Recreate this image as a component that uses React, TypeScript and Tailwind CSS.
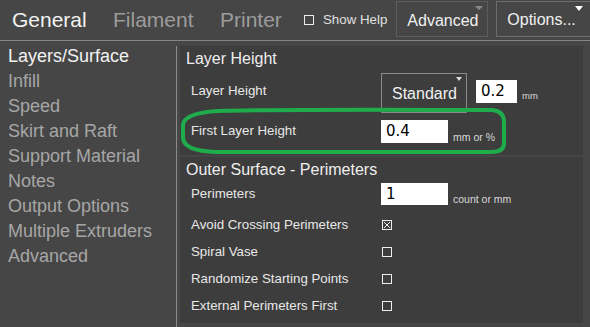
const font = { fontFamily: '"Liberation Sans", Arial, sans-serif' };

const sideItems = [
  'Layers/Surface',
  'Infill',
  'Speed',
  'Skirt and Raft',
  'Support Material',
  'Notes',
  'Output Options',
  'Multiple Extruders',
  'Advanced',
];

function Check({ checked }: { checked?: boolean }) {
  return (
    <svg width="10" height="10" viewBox="0 0 10 10" className="block shrink-0">
      <rect x="0.5" y="0.5" width="9" height="9" fill="none" stroke="#eeeeee" strokeWidth="1" />
      {checked && (
        <path d="M2 2 L8 8 M8 2 L2 8" stroke="#eeeeee" strokeWidth="1" fill="none" />
      )}
    </svg>
  );
}

function CheckRow({ label, checked }: { label: string; checked?: boolean }) {
  return (
    <div className="flex items-center h-[27px]">
      <div className="w-[201px] shrink-0 pl-[11px] text-[13.3px] leading-[16px] text-[#e8e8e8]">{label}</div>
      <div className="ml-[1px]">
        <Check checked={checked} />
      </div>
    </div>
  );
}

export default function App() {
  return (
    <div className="relative w-[590px] h-[327px] overflow-hidden bg-[#464646]" style={font}>
      {/* tab bar */}
      <div className="flex items-center h-[40px] whitespace-nowrap">
        <div className="ml-[12px] w-[101px] shrink-0 text-[21px] text-[#f2f2f2]">General</div>
        <div className="w-[107px] shrink-0 text-[21px] text-[#9c9c9c]">Filament</div>
        <div className="w-[84px] shrink-0 text-[21px] text-[#9c9c9c]">Printer</div>
        <Check />
        <div className="ml-[9px] shrink-0 text-[13.3px] text-[#e0e0e0]">Show Help</div>
        <div className="relative shrink-0 self-start mt-[1px] ml-[9px] w-[92px] h-[36px] border border-[#5c5c5c] pl-[10px] pt-[7px] text-[16px] text-[#f0f0f0]">
          Advanced
          <div className="absolute right-[4px] top-[4px] w-0 h-0 border-l-[4px] border-r-[4px] border-t-[4px] border-l-transparent border-r-transparent border-t-[#8a8a8a]" />
        </div>
        <div className="relative shrink-0 self-start mt-[1px] ml-[8px] w-[100px] h-[36px] border border-[#6c6c6c] pl-[10px] pt-[6px] text-[16px] text-[#f0f0f0]">
          Options...
          <div className="absolute left-[78px] top-[4px] w-0 h-0 border-l-[4px] border-r-[4px] border-t-[5px] border-l-transparent border-r-transparent border-t-white" />
        </div>
      </div>
      <div className="h-px bg-[#858585]" />

      <div className="flex h-[286px]">
        {/* sidebar */}
        <div className="mt-[5px] w-[177px] shrink-0 border-r border-[#8a8a8a]">
          <div className="-mt-[2px] pl-[8px]">
            {sideItems.map((s, i) => (
              <div
                key={s}
                className={`text-[18px] leading-[25px] ${i === 0 ? 'text-[#f2f2f2]' : 'text-[#a6a6a6]'}`}
              >
                {s}
              </div>
            ))}
          </div>
        </div>

        {/* settings */}
        <div className="ml-[3px] mt-[5px] w-[403px] shrink-0 flex flex-col gap-[2px]">
          <div className="h-[109px] bg-[#3d3d3d]">
            <div className="h-[26px] flex items-center pl-[6px] text-[16px] text-[#eeeeee]">Layer Height</div>
            <div className="flex items-start h-[42px]">
              <div className="mt-[11px] w-[201px] shrink-0 pl-[11px] text-[13.3px] leading-[16px] text-[#e8e8e8]">Layer Height</div>
              <div className="relative shrink-0 mt-[1px] w-[86px] h-[40px] border border-[#8a8a8a] flex items-center pl-[10px] pt-[1px] text-[16px] text-[#f0f0f0]">
                Standard
                <div className="absolute right-[4px] top-[3px] w-0 h-0 border-l-[3.5px] border-r-[3.5px] border-t-[4px] border-l-transparent border-r-transparent border-t-[#dddddd]" />
              </div>
              <div
                className="mt-[8px] ml-[9px] w-[41px] h-[23px] shrink-0 bg-white pl-[5px] text-[15px] leading-[23px] text-black"
                style={{ fontFamily: '"DejaVu Sans", sans-serif' }}
              >
                0.2
              </div>
              <div className="mt-[18px] ml-[5px] text-[9.5px] leading-[12px] text-[#d8d8d8]">mm</div>
            </div>
            <div className="flex items-start h-[36px]">
              <div className="mt-[9px] w-[201px] shrink-0 pl-[11px] text-[13.3px] leading-[16px] text-[#e8e8e8]">First Layer Height</div>
              <div
                className="mt-[6px] w-[67px] h-[23px] shrink-0 bg-white pl-[5px] text-[15px] leading-[23px] text-black"
                style={{ fontFamily: '"DejaVu Sans", sans-serif' }}
              >
                0.4
              </div>
              <div className="mt-[17px] ml-[5px] text-[10.5px] leading-[12px] text-[#d8d8d8]">mm or %</div>
            </div>
          </div>

          <div className="h-[166px] bg-[#3d3d3d]">
            <div className="h-[25px] flex items-center pl-[6px] text-[16px] text-[#eeeeee]">Outer Surface - Perimeters</div>
            <div className="flex items-start h-[26px]">
              <div className="mt-[4px] w-[201px] shrink-0 pl-[11px] text-[13.3px] leading-[16px] text-[#e8e8e8]">Perimeters</div>
              <div
                className="mt-[1px] w-[67px] h-[22px] shrink-0 bg-white pl-[5px] text-[15px] leading-[22px] text-black"
                style={{ fontFamily: '"DejaVu Sans", sans-serif' }}
              >
                1
              </div>
              <div className="mt-[11px] ml-[5px] text-[10.5px] leading-[12px] text-[#d8d8d8]">count or mm</div>
            </div>
            <div className="mt-[3px]">
              <CheckRow label="Avoid Crossing Perimeters" checked />
              <CheckRow label="Spiral Vase" />
              <CheckRow label="Randomize Starting Points" />
              <CheckRow label="External Perimeters First" />
            </div>
          </div>
        </div>
      </div>

      {/* green annotation around First Layer Height */}
      <svg className="absolute left-[178px] top-[106px]" width="332" height="52" viewBox="0 0 332 52">
        <path
          d="M40 5 C120 3 240 4 314 4 Q326 5 326 16 L326 37 Q326 46 314 46 L38 46 Q6 45 5 32 L5 19 Q6 7 40 5 Z"
          fill="none"
          stroke="#1fad4b"
          strokeWidth="4"
        />
      </svg>
    </div>
  );
}
